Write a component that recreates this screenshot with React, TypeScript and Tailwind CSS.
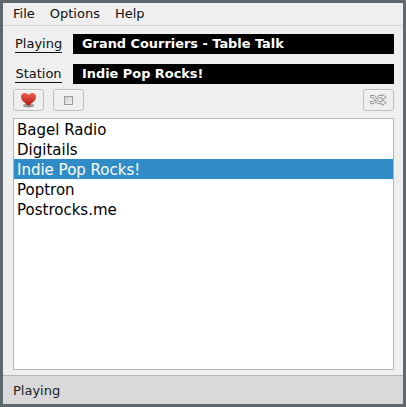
import React from 'react';

const stations = ['Bagel Radio', 'Digitails', 'Indie Pop Rocks!', 'Poptron', 'Postrocks.me'];

function InfoRow({ label, value }: { label: string; value: string }) {
  return (
    <div className="flex h-5 items-center">
      <div className="ml-[2px] w-[47px] border-b border-[#101010] text-center text-[13px] leading-[16px]">{label}</div>
      <div className="ml-[11px] flex h-5 flex-1 items-center bg-black pl-[9px] text-[12.9px] font-bold text-white">{value}</div>
    </div>
  );
}

function ToolButton({ children }: { children: React.ReactNode }) {
  return (
    <button className="flex h-[22px] w-[31px] items-center justify-center rounded-[3px] border border-[#bdbdbd] bg-[#efefef] shadow-[inset_0_1px_0_#f8f8f8]">
      {children}
    </button>
  );
}

export default function App() {
  return (
    <div className="h-[407px] w-[406px] bg-[#5f686d] p-[3px] font-['DejaVu_Sans',sans-serif] text-[#101010]">
      <div className="flex h-[401px] flex-col bg-[#efefef]">
        {/* Menu */}
        <div className="flex h-[23px] shrink-0 items-center gap-[15px] border-b border-[#d4d4d4] pl-[10px] text-[13px]">
          <span>File</span>
          <span>Options</span>
          <span>Help</span>
        </div>

        <div className="flex flex-1 flex-col pl-[10px] pr-[9px] pt-2">
          <div className="flex flex-col gap-[10px]">
            <InfoRow label="Playing" value="Grand Courriers - Table Talk" />
            <InfoRow label="Station" value="Indie Pop Rocks!" />
          </div>

          {/* Toolbar */}
          <div className="mt-[5px] flex items-center gap-[9px]">
            <ToolButton>
              <svg width="17" height="16" viewBox="0 0 17 16">
                <defs>
                  <linearGradient id="heart" x1="0" y1="0" x2="0" y2="1">
                    <stop offset="0" stopColor="#f0604e" />
                    <stop offset="1" stopColor="#b01610" />
                  </linearGradient>
                </defs>
                <ellipse cx="8.5" cy="13.6" rx="5.5" ry="1.9" fill="#777777" opacity="0.75" />
                <path d="M8.5 14C5.2 11.2 1 9 1 4.6 1 2.4 2.8 1 4.7 1 6.3 1 7.7 1.8 8.5 3.1 9.3 1.8 10.7 1 12.3 1 14.2 1 16 2.4 16 4.6 16 9 11.8 11.2 8.5 14Z" fill="url(#heart)" />
              </svg>
            </ToolButton>
            <ToolButton>
              <div className="h-[9px] w-[9px] border border-[#9c9c9c] bg-gradient-to-br from-[#cfcfcf] to-[#f2f2f2]" />
            </ToolButton>
            <div className="flex-1" />
            <ToolButton>
              <svg width="17" height="12" viewBox="0 0 17 12" fill="#f0f0f0" stroke="#969696" strokeWidth="1" strokeLinejoin="round">
                <path d="M.5 1.5H4.5L8.5 7.5H12V5.8L16.3 8.6 12 11.4V9.7H7.5L3.5 3.7H.5Z" />
                <path d="M.5 7.5H3.5L4.8 5.8 6 7.6 4.5 9.7H.5ZM7.4 3.6 8.5 1.5H12V.4L16.3 3.2 12 6V3.7H9.4L8.6 5Z" />
              </svg>
            </ToolButton>
          </div>

          {/* Station list */}
          <div className="mt-[7px] h-[252px] border border-[#b5b5b5] bg-white text-[15px]">
            {stations.map((name) => (
              <div
                key={name}
                className={
                  name === 'Indie Pop Rocks!'
                    ? 'flex h-5 items-center bg-[#308cc6] pl-[3px] pt-[2px] text-white'
                    : 'flex h-5 items-center pl-[3px] pt-[2px] text-black'
                }
              >
                {name}
              </div>
            ))}
          </div>
        </div>

        {/* Status bar */}
        <div className="flex h-[29px] shrink-0 items-center border-t border-[#b5b5b5] bg-[#d9d9d9] pl-[10px] pt-[2px] text-[13px] text-[#222222]">
          Playing
        </div>
      </div>
    </div>
  );
}
